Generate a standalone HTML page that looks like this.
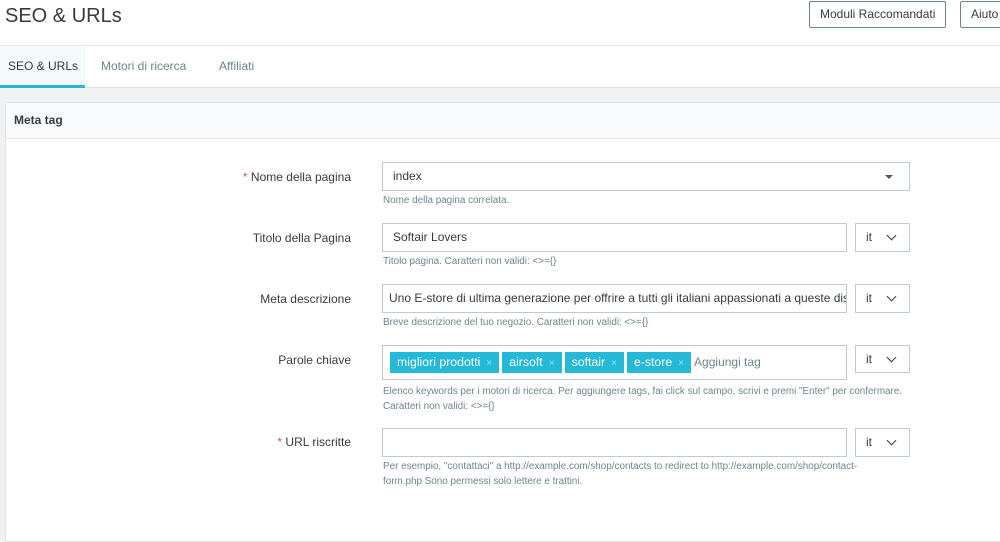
<!DOCTYPE html><html><head><style>
*{box-sizing:border-box;margin:0;padding:0}
body{width:1000px;height:535px;overflow:hidden;background:#eff1f2;font-family:"Liberation Sans",sans-serif;font-size:12px;color:#363a41;position:relative}
.hdr{position:absolute;left:0;top:0;width:1000px;height:46px;background:#fff;border-bottom:1px solid #e5e7e9}
.hdr h1{position:absolute;left:5px;top:5px;font-size:20px;font-weight:normal;color:#363a41}
.btn{position:absolute;top:1px;height:27px;border:1px solid #6c868e;background:#fff;color:#363a41;font-size:12px;line-height:25px;padding:0 10px;border-radius:2px}
.tabs{position:absolute;left:0;top:46px;width:1000px;height:42px;background:#fff;border-bottom:1px solid #dfe3e5}
.tab{position:absolute;top:0;height:42px;line-height:40px;color:#6c868e;font-size:12px}
.tab.a{left:0;width:85px;background:#f4f9fc;color:#363a41;border-bottom:3px solid #25b9d7;padding-left:8px}
.panel{position:absolute;left:5px;top:102px;width:1000px;height:440px;background:#fff;border:1px solid #dfe3e5;border-radius:3px}
.ph{height:36px;line-height:34px;padding-left:8px;font-weight:bold;font-size:12px;border-bottom:1px solid #e5e7e9;background:#fafbfc}
.lbl{position:absolute;right:649px;font-size:12px;color:#363a41;text-align:right}
.lbl b{color:#c05c67;font-weight:normal}
.in{position:absolute;left:382px;height:29px;border:1px solid #bbcdd2;background:#fff;padding-left:10px;line-height:27px;font-size:12px;white-space:nowrap;overflow:hidden}
.lang{position:absolute;left:855px;width:55px;height:29px;border:1px solid #bbcdd2;line-height:27px;padding-left:10px;color:#363a41}
.lang:after{content:"";position:absolute;right:14px;top:8px;width:6px;height:6px;border-right:1.5px solid #363a41;border-bottom:1.5px solid #363a41;transform:rotate(45deg)}
.help{position:absolute;left:383px;font-size:9.9px;color:#6c868e;line-height:15px}
.tag{display:inline-block;background:#25b9d7;color:#fff;height:21px;line-height:21px;padding:0 7px;margin-right:3px;font-size:12.3px}
.tag i{font-style:normal;color:#9fe0ee;font-size:10px;margin-left:6px}
</style></head><body>
<div class="hdr"><h1>SEO &amp; URLs</h1>
<div class="btn" style="left:809px">Moduli Raccomandati</div>
<div class="btn" style="left:960px;width:60px">Aiuto</div></div>
<div class="tabs"><div class="tab a">SEO &amp; URLs</div><div class="tab" style="left:101px">Motori di ricerca</div><div class="tab" style="left:219px">Affiliati</div></div>
<div class="panel"><div class="ph">Meta tag</div></div>
<div class="lbl" style="top:170px"><b>*</b> Nome della pagina</div>
<div class="in" style="top:162px;width:528px">index<span style="position:absolute;right:16px;top:12px;border:4px solid transparent;border-top:4px solid #555"></span></div>
<div class="help" style="top:193px">Nome della pagina correlata.</div>
<div class="lbl" style="top:231px">Titolo della Pagina</div>
<div class="in" style="top:223px;width:465px">Softair Lovers</div><div class="lang" style="top:223px">it</div>
<div class="help" style="top:254px">Titolo pagina. Caratteri non validi: &lt;&gt;={}</div>
<div class="lbl" style="top:292px">Meta descrizione</div>
<div class="in" style="top:284px;width:465px;padding-left:6px">Uno E-store di ultima generazione per offrire a tutti gli italiani appassionati a queste discipline</div><div class="lang" style="top:284px">it</div>
<div class="help" style="top:315px">Breve descrizione del tuo negozio. Caratteri non validi: &lt;&gt;={}</div>
<div class="lbl" style="top:353px">Parole chiave</div>
<div class="in" style="top:345px;width:465px;height:35px;padding:6px 0 0 7px;line-height:normal"><span class="tag">migliori prodotti<i>×</i></span><span class="tag">airsoft<i>×</i></span><span class="tag">softair<i>×</i></span><span class="tag">e-store<i>×</i></span><span style="color:#6c868e">Aggiungi tag</span></div>
<div class="lang" style="top:345px;height:28px">it</div>
<div class="help" style="top:384px">Elenco keywords per i motori di ricerca. Per aggiungere tags, fai click sul campo, scrivi e premi "Enter" per confermare.<br>Caratteri non validi: &lt;&gt;={}</div>
<div class="lbl" style="top:435px"><b>*</b> URL riscritte</div>
<div class="in" style="top:428px;width:465px"></div><div class="lang" style="top:428px">it</div>
<div class="help" style="top:459px">Per esempio, "contattaci" a http://example.com/shop/contacts to redirect to http://example.com/shop/contact-<br>form.php Sono permessi solo lettere e trattini.</div>
</body></html>
